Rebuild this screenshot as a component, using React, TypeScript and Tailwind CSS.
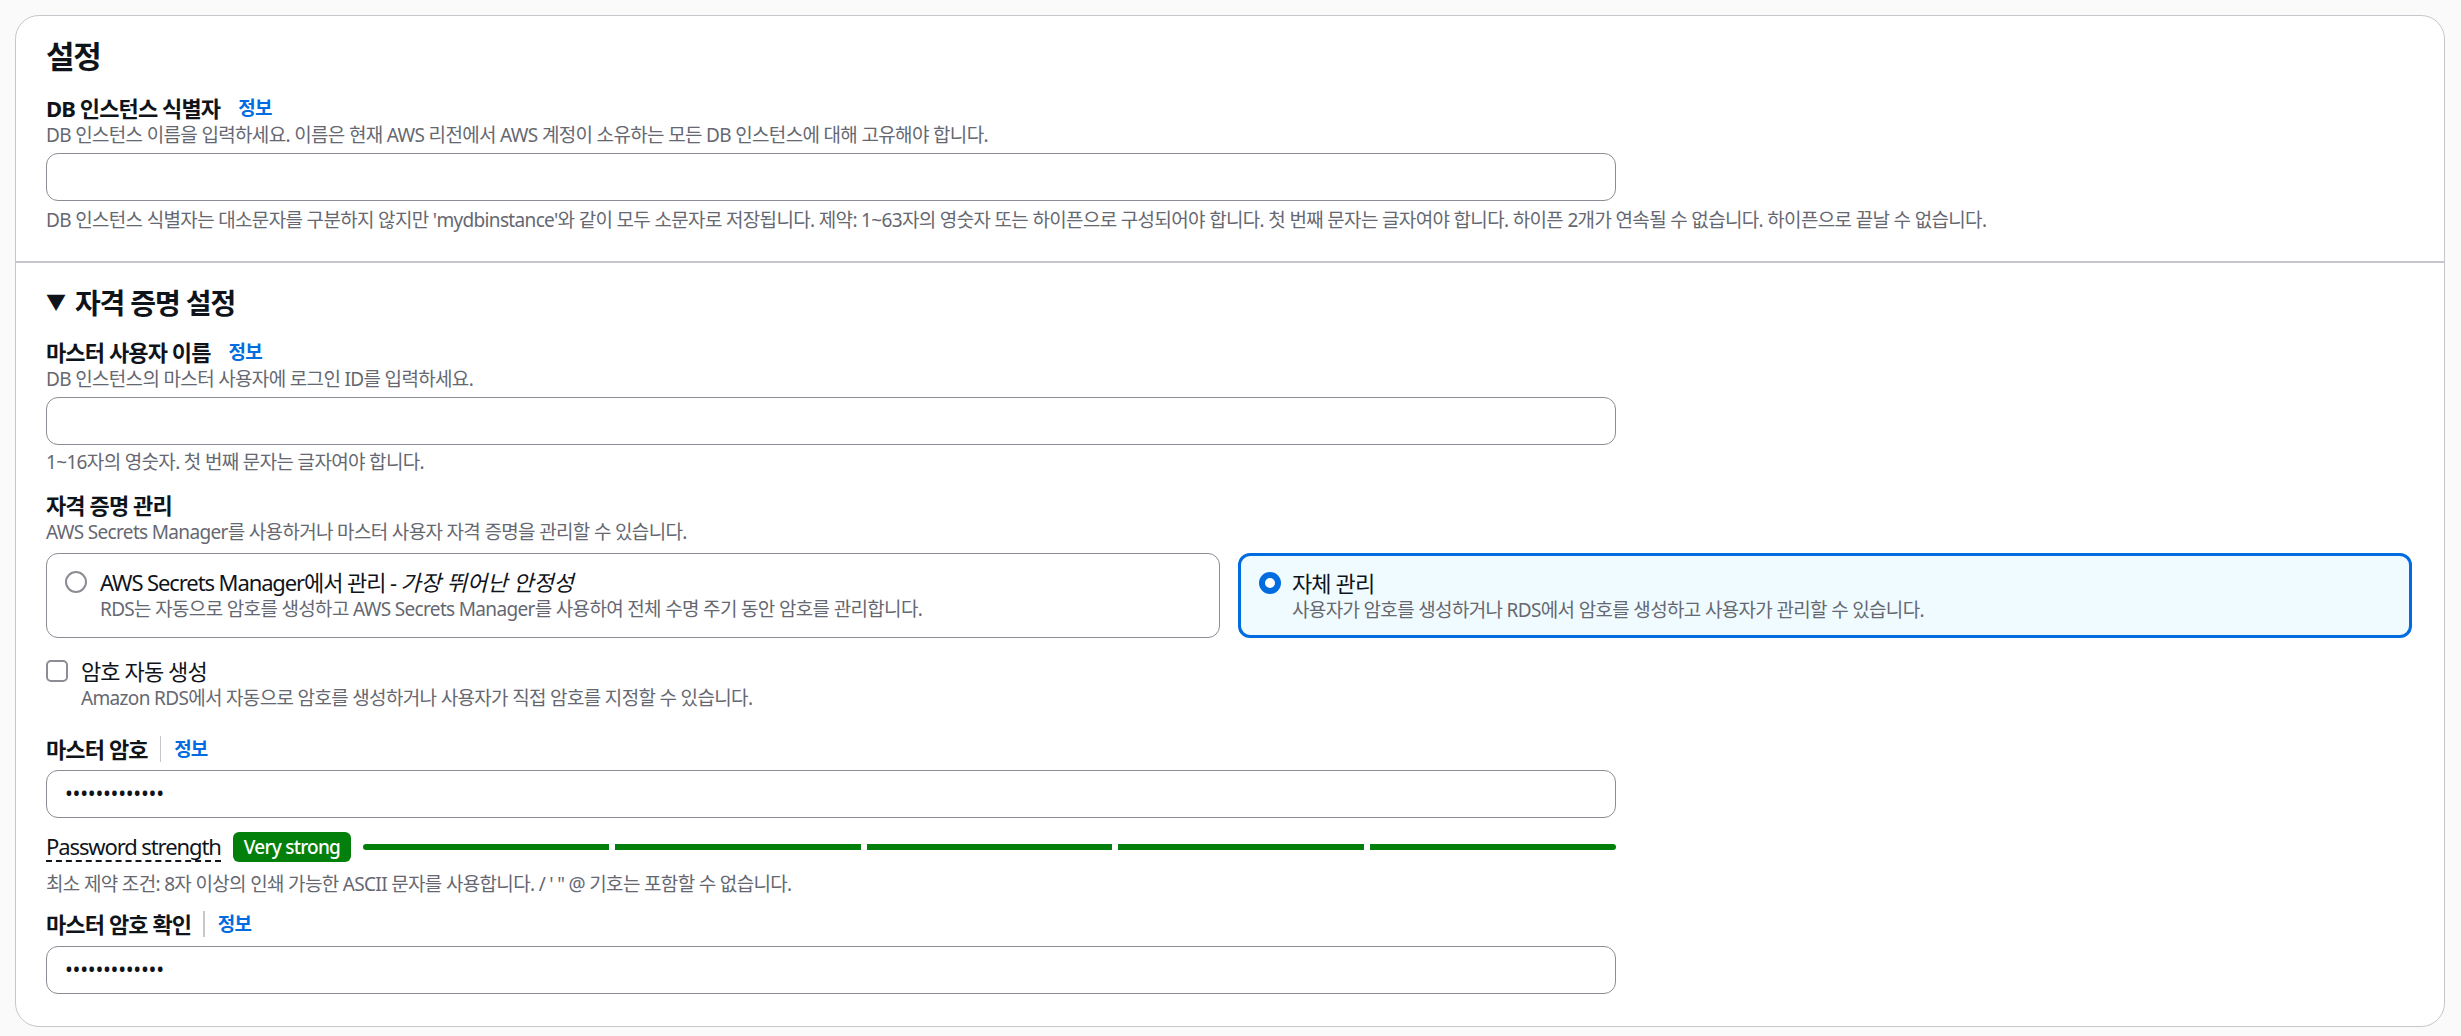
import React from 'react'

const FONT = "font-[family-name:'Noto_Sans','Noto_Sans_CJK_KR',sans-serif]"

function Info() {
  return <span className="text-[19px] leading-[30px] font-bold tracking-[-0.04em] text-[#006ce0]">정보</span>
}

function Label({ text, info, divider }: { text: string; info?: boolean; divider?: boolean }) {
  return (
    <div className="flex items-center h-[30px]">
      <span className="text-[22px] leading-[30px] font-bold tracking-[-0.04em] text-[#0f141a]">{text}</span>
      {info && !divider && <span className="ml-[18px]"><Info /></span>}
      {info && divider && (
        <>
          <span className="ml-[12px] mr-[13px] w-[1.5px] h-[26px] bg-[#c6c6cd]" />
          <Info />
        </>
      )}
    </div>
  )
}

function Desc({ children }: { children: React.ReactNode }) {
  return <div className="text-[19px] leading-[25px] tracking-[-0.035em] text-[#656871]">{children}</div>
}

function Input({ value }: { value?: string }) {
  return (
    <div className="w-[1570px] h-[48px] rounded-[12px] border-[1.5px] border-[#8c8c94] bg-white flex items-center px-[18px]">
      {value && <span className="text-[21px] tracking-[-0.3px] text-[#0f141a]">{value}</span>}
    </div>
  )
}

export default function App() {
  return (
    <div className={`min-h-screen bg-[#fafafa] pt-[15px] pl-[15px] pr-[16px] pb-[8px] ${FONT}`}>
      <div className="rounded-[24px] border-[1.5px] border-[#c6c6cd] bg-white">
        {/* 설정 */}
        <section className="px-[30px] pt-[20px] pb-[28px]">
          <h2 className="text-[31px] leading-[40px] font-bold tracking-[-0.04em] text-[#0f141a]">설정</h2>
          <div className="mt-[17px]">
            <Label text="DB 인스턴스 식별자" info />
            <Desc>DB 인스턴스 이름을 입력하세요. 이름은 현재 AWS 리전에서 AWS 계정이 소유하는 모든 DB 인스턴스에 대해 고유해야 합니다.</Desc>
            <div className="mt-[5px]"><Input /></div>
            <div className="mt-[7px]">
              <Desc>DB 인스턴스 식별자는 대소문자를 구분하지 않지만 'mydbinstance'와 같이 모두 소문자로 저장됩니다. 제약: 1~63자의 영숫자 또는 하이픈으로 구성되어야 합니다. 첫 번째 문자는 글자여야 합니다. 하이픈 2개가 연속될 수 없습니다. 하이픈으로 끝날 수 없습니다.</Desc>
            </div>
          </div>
        </section>
        <div className="h-[1.5px] bg-[#c6c6cd]" />

        {/* 자격 증명 설정 */}
        <section className="px-[30px] pt-[22px] pb-[32px]">
          <h3 className="text-[28px] leading-[36px] font-bold tracking-[-0.04em] text-[#0f141a] flex items-center gap-[10px]">
            <span className="text-[20px]">▼</span>
            자격 증명 설정
          </h3>

          <div className="mt-[16px]">
            <Label text="마스터 사용자 이름" info />
            <Desc>DB 인스턴스의 마스터 사용자에 로그인 ID를 입력하세요.</Desc>
            <div className="mt-[5px]"><Input /></div>
            <div className="mt-[5px]"><Desc>1~16자의 영숫자. 첫 번째 문자는 글자여야 합니다.</Desc></div>
          </div>

          <div className="mt-[15px]">
            <Label text="자격 증명 관리" />
            <Desc>AWS Secrets Manager를 사용하거나 마스터 사용자 자격 증명을 관리할 수 있습니다.</Desc>
            <div className="mt-[8px] grid grid-cols-2 gap-[18px] w-[2366px]">
              <div className="h-[85px] rounded-[12px] border-[1.5px] border-[#8c8c94] bg-white flex gap-[13px] pl-[18px] pt-[13px]">
                <span className="mt-[4px] w-[22px] h-[22px] rounded-full border-2 border-[#8c8c94] bg-white shrink-0" />
                <div>
                  <div className="text-[22px] leading-[30px] text-[#0f141a]">
                    <span className="tracking-[-0.05em]">AWS Secrets Manager에서 관리 - </span><i>가장 뛰어난 안정성</i>
                  </div>
                  <div className="text-[19px] leading-[25px] tracking-[-0.035em] text-[#656871]">
                    RDS는 자동으로 암호를 생성하고 AWS Secrets Manager를 사용하여 전체 수명 주기 동안 암호를 관리합니다.
                  </div>
                </div>
              </div>
              <div className="h-[85px] rounded-[12px] border-[3px] border-[#006ce0] bg-[#f0fbff] flex gap-[11px] pl-[18px] pt-[12px]">
                <span className="mt-[4px] w-[22px] h-[22px] rounded-full border-[6px] border-[#006ce0] bg-white shrink-0" />
                <div>
                  <div className="text-[22px] leading-[30px] tracking-[-0.04em] text-[#0f141a]">자체 관리</div>
                  <div className="text-[19px] leading-[25px] tracking-[-0.035em] text-[#656871]">
                    사용자가 암호를 생성하거나 RDS에서 암호를 생성하고 사용자가 관리할 수 있습니다.
                  </div>
                </div>
              </div>
            </div>
          </div>

          <div className="mt-[18px] flex gap-[13px]">
            <span className="mt-[4px] w-[22px] h-[22px] rounded-[5px] border-2 border-[#8c8c94] bg-white shrink-0" />
            <div>
              <div className="text-[22px] leading-[30px] tracking-[-0.04em] text-[#0f141a]">암호 자동 생성</div>
              <Desc>Amazon RDS에서 자동으로 암호를 생성하거나 사용자가 직접 암호를 지정할 수 있습니다.</Desc>
            </div>
          </div>

          <div className="mt-[23px]">
            <Label text="마스터 암호" info divider />
            <div className="mt-[6px]"><Input value="•••••••••••••" /></div>
            <div className="mt-[14px] flex items-center w-[1570px] h-[30px]">
              <span className="text-[22px] leading-[28px] tracking-[-0.05em] text-[#0f141a] border-b-2 border-dashed border-[#0f141a]">Password strength</span>
              <span className="ml-[12px] h-[30px] px-[11px] rounded-[6px] bg-[#037f0c] text-white text-[19px] leading-[30px] font-medium tracking-[-0.04em]">Very strong</span>
              <div className="ml-[12px] flex-1 flex gap-[6px]">
                <div className="flex-1 h-[6px] bg-[#037f0c] rounded-l-full" />
                <div className="flex-1 h-[6px] bg-[#037f0c]" />
                <div className="flex-1 h-[6px] bg-[#037f0c]" />
                <div className="flex-1 h-[6px] bg-[#037f0c]" />
                <div className="flex-1 h-[6px] bg-[#037f0c] rounded-r-full" />
              </div>
            </div>
            <div className="mt-[10px]">
              <Desc>최소 제약 조건: 8자 이상의 인쇄 가능한 ASCII 문자를 사용합니다. / ' " @ 기호는 포함할 수 없습니다.</Desc>
            </div>
          </div>

          <div className="mt-[12px]">
            <Label text="마스터 암호 확인" info divider />
            <div className="mt-[7px]"><Input value="•••••••••••••" /></div>
          </div>
        </section>
      </div>
    </div>
  )
}
